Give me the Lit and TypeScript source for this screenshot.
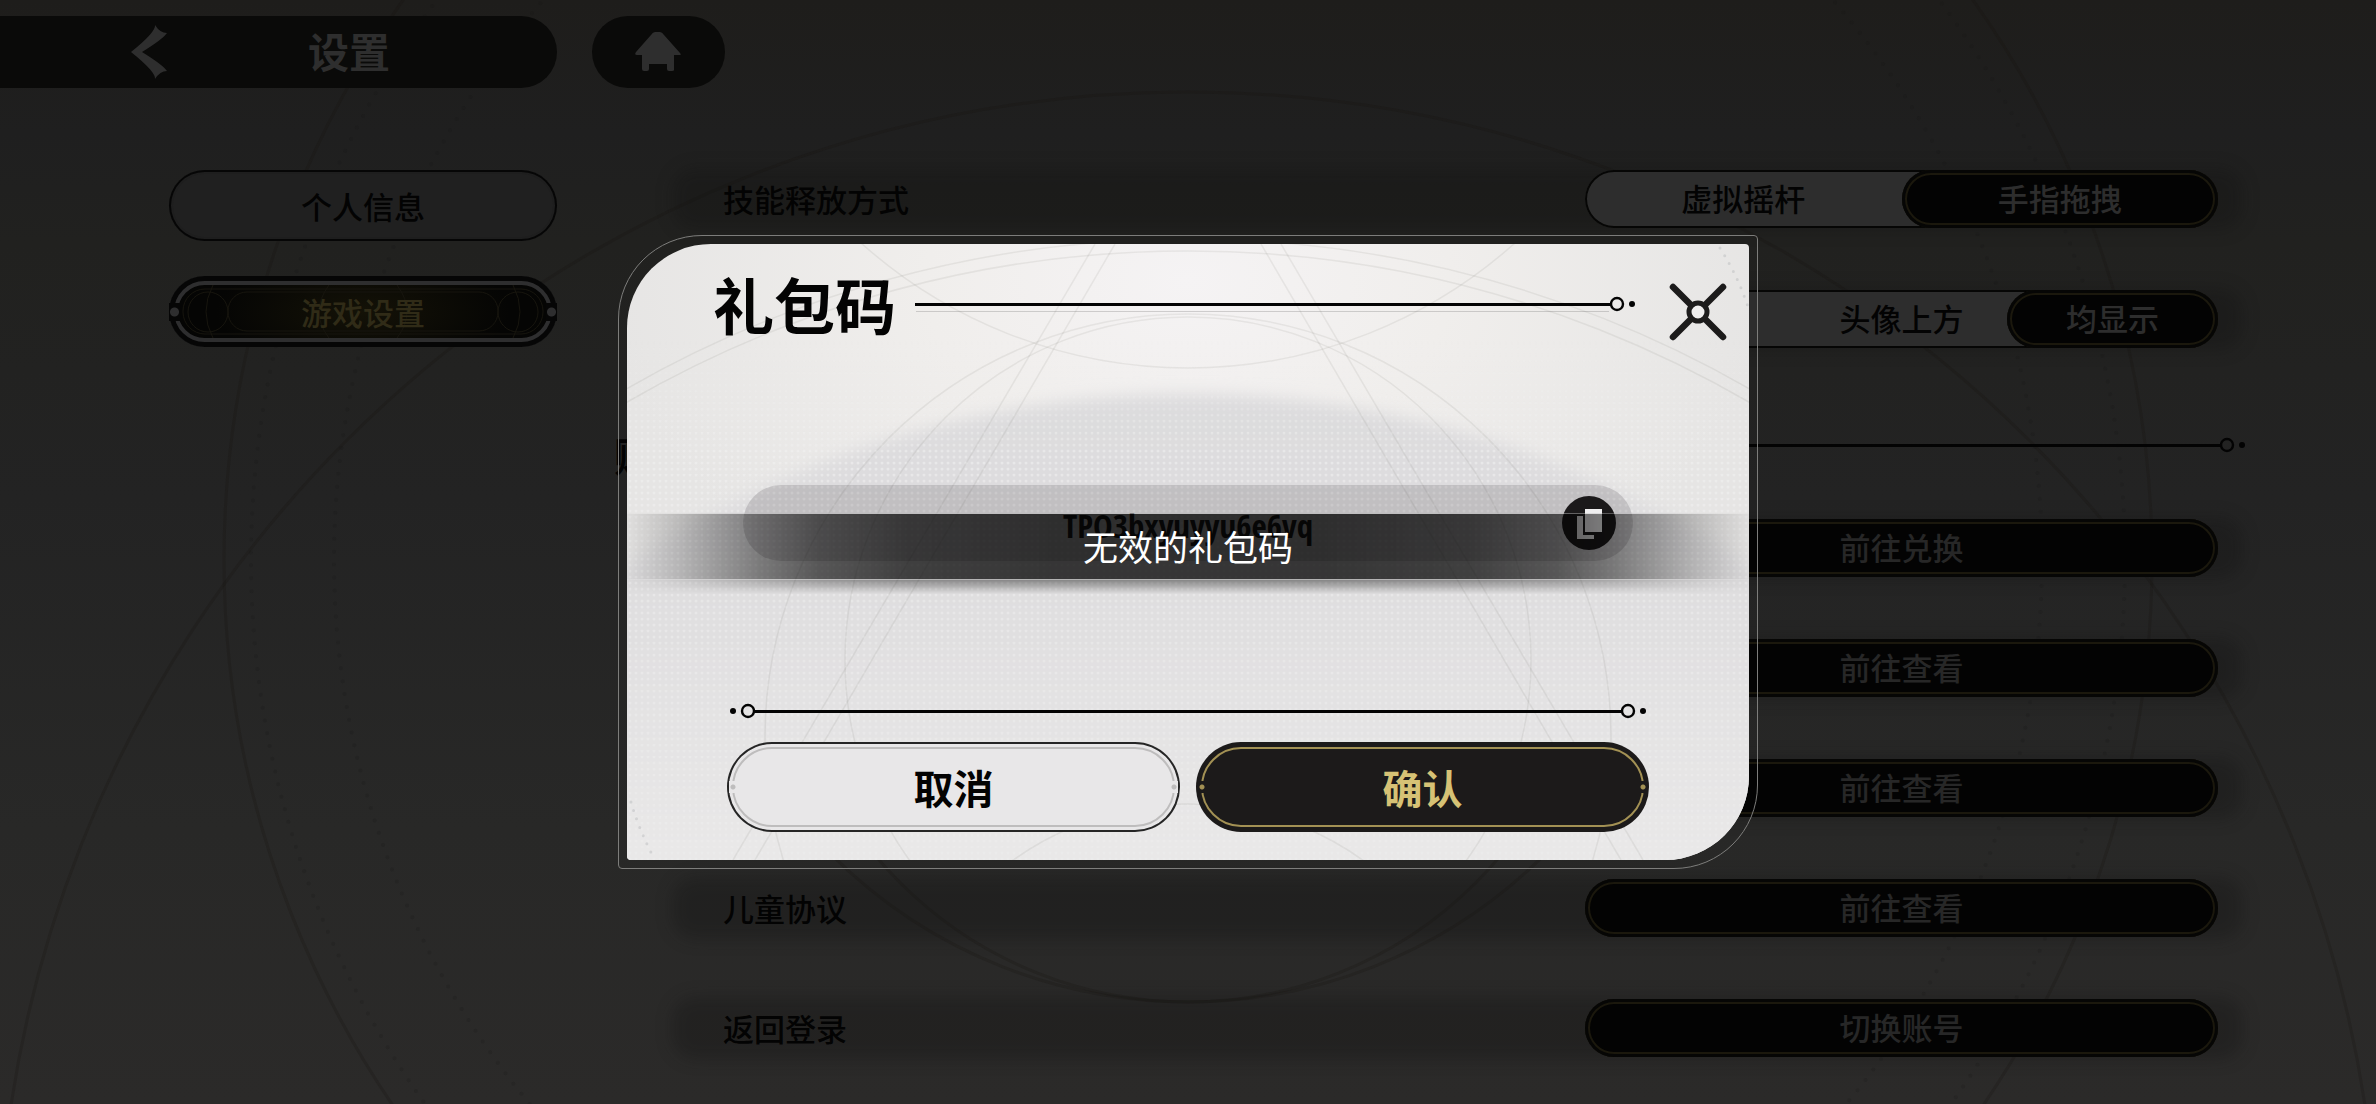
import { LitElement, html, css, svg } from "lit";
import { customElement, property, state } from "lit/decorators.js";
import { classMap } from "lit/directives/class-map.js";

const buttonReset = css`
  * {
    box-sizing: border-box;
  }
  button {
    margin: 0;
    padding: 0;
    border: 0;
    background: none;
    color: inherit;
    font: inherit;
    cursor: pointer;
  }
`;

/** Thin divider that ends in a small ring and a dot. */
@customElement("ring-rule")
class RingRule extends LitElement {
  @property({ type: Boolean }) both = false;
  @property({ type: Boolean }) echo = false;

  static styles = css`
    :host {
      display: flex;
      align-items: center;
      height: 20px;
    }
    .bar {
      flex: 1;
      height: 3px;
      background: currentColor;
    }
    .bar.echo {
      box-shadow: 0 7px 0 -1px rgba(90, 90, 90, 0.25);
    }
    svg {
      display: block;
      flex: none;
      width: 25px;
      height: 20px;
    }
    .start {
      transform: scaleX(-1);
    }
  `;

  private cap(name: string) {
    return html`<svg class=${name} viewBox="0 0 25 20" aria-hidden="true">
      <circle cx="7" cy="10" r="6" fill="none" stroke="currentColor" stroke-width="2.4" />
      <circle cx="22" cy="10" r="3" fill="currentColor" />
    </svg>`;
  }

  render() {
    return html`${this.both ? this.cap("start") : ""}<span class=${classMap({ bar: true, echo: this.echo })}></span
      >${this.cap("end")}`;
  }
}

/** Pill-shaped choice between several options. */
@customElement("pill-toggle")
class PillToggle extends LitElement {
  @property({ attribute: false }) options: string[] = [];
  @property({ type: Number }) selected = 0;

  static styles = [
    buttonReset,
    css`
      :host {
        display: flex;
        height: 58px;
        border-radius: 29px;
        background: #2d2d2d;
        box-shadow: inset 0 0 0 2px #060605;
        color: #030303;
      }
      .option {
        flex: 1;
        height: 58px;
        padding-bottom: 2px;
        border-radius: 29px;
        line-height: 56px;
      }
      .active {
        background: #030303;
        box-shadow: inset 0 0 0 3px #060605, inset 0 0 0 5px #1b180d;
        color: #2d2d2d;
      }
    `,
  ];

  render() {
    return this.options.map((label, i) =>
      label
        ? html`<button
            class=${classMap({ option: true, active: i === this.selected })}
            aria-pressed=${i === this.selected}
            @click=${() => (this.selected = i)}
          >
            ${label}
          </button>`
        : html`<span class="option"></span>`
    );
  }
}

/** Dialog that shows a gift code and the result of redeeming it. */
@customElement("gift-dialog")
class GiftDialog extends LitElement {
  @state() private code = "TPO3bxyuyyu6e6vq";

  static styles = [
    buttonReset,
    css`
      :host {
        display: block;
        position: relative;
        box-sizing: border-box;
        width: min(1140px, 94vw);
        padding: 8px;
        border: 1px solid #7d7d7b;
        border-radius: 84px 4px 84px 4px;
        color: #030303;
      }
      .panel {
        position: relative;
        overflow: hidden;
        border-radius: 84px 4px 84px 4px;
        background: radial-gradient(ellipse 52% 62% at 50% 6%, #f5f3f4, #f0eeec 45%, #e6e5e4 100%);
      }
      .art {
        position: absolute;
        inset: 0;
        width: 100%;
        height: 100%;
      }
      .head {
        position: relative;
        display: flex;
        align-items: center;
        height: 110px;
        padding: 10px 22px 0 86px;
      }
      h1 {
        margin: 0 19px 0 0;
        font-size: 61px;
        font-weight: 700;
        line-height: 88px;
      }
      .head ring-rule {
        flex: 1;
      }
      .close {
        width: 58px;
        height: 58px;
        margin: 16px 0 0 34px;
      }
      .close svg,
      .copy svg {
        display: block;
        width: 100%;
        height: 100%;
      }
      .body {
        position: relative;
        padding: 131px 100px 28px;
      }
      .field {
        position: relative;
        margin: 0 16px 140px;
      }
      .body > ring-rule {
        margin: 0 3px;
      }
      .code {
        display: block;
        width: 100%;
        height: 76px;
        padding: 4px 76px 0;
        border: 0;
        border-radius: 38px;
        outline: 0;
        background: rgba(20, 16, 20, 0.14);
        color: #1b1a1a;
        font-family: "Open Sans Condensed", "Liberation Sans Narrow", "Roboto Condensed", "Liberation Sans", sans-serif;
        font-size: 33px;
        font-weight: 700;
        text-align: center;
      }
      .copy {
        position: absolute;
        top: 11px;
        right: 17px;
        width: 54px;
        height: 54px;
      }
      .actions {
        display: grid;
        grid-template-columns: 1fr 1fr;
        gap: 16px;
        margin-top: 21px;
      }
      .action {
        position: relative;
        height: 90px;
        border-radius: 45px;
        font-size: 40px;
        font-weight: 700;
        line-height: 90px;
      }
      .action::before {
        content: "";
        position: absolute;
        inset: 5px;
        border: 2px solid var(--ring);
        border-radius: 40px;
      }
      .action::after {
        content: "";
        position: absolute;
        inset: 0 2px;
        background: radial-gradient(circle, var(--ring) 2px, var(--fill) 3px) left center / 8px 12px no-repeat,
          radial-gradient(circle, var(--ring) 2px, var(--fill) 3px) right center / 8px 12px no-repeat;
      }
      .cancel {
        --ring: #bebdbd;
        --fill: #e8e7e8;
        background: var(--fill);
        box-shadow: inset 0 0 0 2px #252525;
      }
      .confirm {
        --ring: #a39154;
        --fill: #1c1a1a;
        background: var(--fill);
        color: #d6c275;
      }
      .toast {
        position: absolute;
        top: 277px;
        left: 8px;
        right: 8px;
        height: 67px;
        color: #ffffff;
        font-size: 35px;
        font-weight: 400;
        line-height: 66px;
        text-align: center;
      }
      .fade {
        position: absolute;
        inset: 0 0 -24px;
        -webkit-mask-image: linear-gradient(
          90deg,
          rgba(0, 0, 0, 0.04),
          rgba(0, 0, 0, 0.26) 5%,
          rgba(0, 0, 0, 0.6) 12%,
          rgba(0, 0, 0, 0.8) 17%,
          rgba(0, 0, 0, 0.94) 25%,
          #000 38%,
          #000 62%,
          rgba(0, 0, 0, 0.94) 75%,
          rgba(0, 0, 0, 0.8) 83%,
          rgba(0, 0, 0, 0.6) 88%,
          rgba(0, 0, 0, 0.26) 95%,
          rgba(0, 0, 0, 0.04)
        );
      }
      .band {
        height: 67px;
        border-top: 1px solid rgba(190, 190, 190, 0.6);
        border-bottom: 1px solid rgba(150, 150, 150, 0.6);
        background: rgba(0, 0, 0, 0.76);
        background-clip: padding-box;
      }
      .shade {
        height: 14px;
        background: linear-gradient(rgba(0, 0, 0, 0.4), rgba(0, 0, 0, 0));
      }
      .message {
        position: relative;
      }
    `,
  ];

  private renderArt() {
    const star = [
      [468, 106],
      [488, 128],
      [654, 1016],
      [634, 994],
    ];
    return html`<svg class="art" viewBox="0 0 1122 616" preserveAspectRatio="none" aria-hidden="true">
      <defs>
        <linearGradient id="hill" gradientUnits="userSpaceOnUse" x1="0" y1="150" x2="0" y2="616">
          <stop offset="0" stop-color="#dcdbdd" />
          <stop offset="0.5" stop-color="#e0dfe0" />
          <stop offset="1" stop-color="#e9e8e8" />
        </linearGradient>
        <linearGradient id="grainFade" x1="0" y1="0" x2="0" y2="1">
          <stop offset="0.15" stop-color="#ffffff" stop-opacity="0" />
          <stop offset="0.35" stop-color="#ffffff" stop-opacity="0.9" />
          <stop offset="1" stop-color="#ffffff" stop-opacity="0.5" />
        </linearGradient>
        <filter id="soft" x="-5%" y="-5%" width="110%" height="110%">
          <feGaussianBlur stdDeviation="8" />
        </filter>
        <pattern id="grain" width="6" height="6" patternUnits="userSpaceOnUse">
          <circle cx="3" cy="3" r="1.5" fill="#f2f1f1" fill-opacity="0.6" />
        </pattern>
        <mask id="grainMask"><rect width="1122" height="616" fill="url(#grainFade)" /></mask>
      </defs>
      <circle cx="561" cy="1160" r="1010" fill="url(#hill)" filter="url(#soft)" />
      <rect width="1122" height="616" fill="url(#grain)" mask="url(#grainMask)" />
      <g fill="none" stroke="#6b675f" stroke-opacity="0.1" stroke-width="1.5">
        ${star.map(([top, bottom]) => svg`<path d="M${top} 0 L${bottom} 616" />`)}
        <circle cx="561" cy="1122" r="1127" />
        <circle cx="561" cy="1122" r="1115" />
        <circle cx="561" cy="493" r="423" />
        <circle cx="561" cy="416" r="343" />
        <circle cx="561" cy="-366" r="490" />
        <circle cx="561" cy="860" r="300" />
      </g>
      <g fill="none" stroke="#7d8288" stroke-opacity="0.2" stroke-width="3" stroke-linecap="round" stroke-dasharray="0 9">
        <path d="M1093 4 Q1112 34 1122 66" />
        <path d="M4 558 Q12 586 28 616" />
      </g>
    </svg>`;
  }

  render() {
    return html`
      <div class="panel">
        ${this.renderArt()}
        <div class="head">
          <h1>礼包码</h1>
          <ring-rule echo></ring-rule>
          <button class="close" aria-label="关闭">
            <svg viewBox="0 0 58 58" fill="none" stroke="#1c1b1b" stroke-linecap="round">
              <path d="M4 4 L22 22 M54 4 L36 22 M4 54 L22 36 M54 54 L36 36" stroke-width="6.5" />
              <circle cx="29" cy="29" r="9" stroke-width="5" fill="#eeeded" />
            </svg>
          </button>
        </div>
        <div class="body">
          <div class="field">
            <input
              class="code"
              aria-label="礼包码"
              spellcheck="false"
              .value=${this.code}
              @input=${(e: Event) => (this.code = (e.target as HTMLInputElement).value)}
            />
            <button class="copy" aria-label="复制">
              <svg viewBox="0 0 54 54">
                <circle cx="27" cy="27" r="27" fill="#1b191a" />
                <path d="M15 20 H21 V39 H32 V43 H15 Z" fill="#e6e5e6" />
                <path d="M23 13 H40 V36 H23 Z" fill="#f0eff0" />
              </svg>
            </button>
          </div>
          <ring-rule both></ring-rule>
          <div class="actions">
            <button class="action cancel">取消</button>
            <button class="action confirm">确认</button>
          </div>
        </div>
      </div>
      <div class="toast" role="status">
        <div class="fade">
          <div class="band"></div>
          <div class="shade"></div>
        </div>
        <span class="message">无效的礼包码</span>
      </div>
    `;
  }
}

interface SettingRow {
  label: string;
  options?: string[];
  selected?: number;
  action?: string;
}

@customElement("app-root")
class AppRoot extends LitElement {
  @state() private tab = 1;

  private tabs = ["个人信息", "游戏设置"];

  private battleRows: SettingRow[] = [
    { label: "技能释放方式", options: ["虚拟摇杆", "手指拖拽"], selected: 1 },
    { label: "", options: ["", "头像上方", "均显示"], selected: 2 },
  ];

  private accountRows: SettingRow[] = [
    { label: "", action: "前往兑换" },
    { label: "", action: "前往查看" },
    { label: "", action: "前往查看" },
    { label: "儿童协议", action: "前往查看" },
    { label: "返回登录", action: "切换账号" },
  ];

  static styles = [
    buttonReset,
    css`
      :host {
        display: block;
        color: #030303;
        font-family: "Noto Sans CJK SC", "Noto Sans", sans-serif;
        font-size: 31px;
        font-weight: 500;
      }
      .screen {
        position: relative;
        min-height: 100vh;
        overflow: hidden;
        padding-top: 16px;
        background: linear-gradient(#1e1d1b, #1f1f1f 12%, #21211f 22%, #232323 45%, #282827 75%, #2b2a29);
      }
      .sky {
        position: absolute;
        inset: 0;
        width: 100%;
        height: 100%;
      }
      .topbar {
        position: relative;
        display: flex;
        gap: 35px;
      }
      .crumb,
      .home {
        height: 72px;
        background: #0a0a09;
        color: #2e2e2e;
      }
      .crumb {
        display: flex;
        align-items: center;
        width: 557px;
        padding-left: 130px;
        border-radius: 0 36px 36px 0;
      }
      .back {
        width: 40px;
        height: 56px;
      }
      .back svg,
      .home svg {
        display: block;
        width: 100%;
        height: 100%;
      }
      .heading {
        margin: 0 0 4px 138px;
        font-size: 41px;
        font-weight: 700;
        line-height: 68px;
      }
      .home {
        width: 133px;
        border-radius: 36px;
      }
      .layout {
        position: relative;
        display: flex;
        gap: 109px;
        padding: 82px 131px 40px 169px;
      }
      nav {
        display: flex;
        flex-direction: column;
        gap: 35px;
        width: 388px;
      }
      .tab {
        position: relative;
        height: 71px;
        border-radius: 36px;
        background: #202020;
        box-shadow: inset 0 0 0 2px #060606, inset 0 0 0 4px #1e1e1e;
        line-height: 71px;
      }
      .tab.current {
        background: radial-gradient(ellipse 38% 80% at center, #141207, #050504);
        box-shadow: inset 0 0 0 5px #060606, inset 0 0 0 9px #2e2e2f;
        color: #302b17;
      }
      .tab.current::before,
      .tab.current::after {
        content: "";
        position: absolute;
        top: 27px;
        width: 11px;
        height: 18px;
        background: radial-gradient(circle, #2e2e2f 4px, #060606 5px);
      }
      .tab.current::before {
        left: 0;
      }
      .tab.current::after {
        right: 0;
      }
      .ornament {
        position: absolute;
        inset: 0;
        width: 100%;
        height: 100%;
      }
      .caption {
        position: relative;
      }
      .settings {
        flex: 1;
        min-width: 0;
      }
      .rows {
        display: flex;
        flex-direction: column;
        gap: 62px;
      }
      .row {
        position: relative;
        display: flex;
        align-items: center;
        justify-content: space-between;
        height: 58px;
        padding: 0 27px 0 57px;
      }
      .row::before {
        content: "";
        position: absolute;
        inset: -2px 2px -2px 6px;
        border-radius: 24px;
        background: rgba(18, 18, 18, 0.3);
        filter: blur(8px);
      }
      .label {
        position: relative;
        padding-bottom: 2px;
      }
      .control {
        position: relative;
        width: 633px;
      }
      .go {
        height: 58px;
        padding-bottom: 2px;
        border-radius: 29px;
        background: #030303;
        box-shadow: inset 0 0 0 3px #060605, inset 0 0 0 5px #1b180d;
        color: #272727;
        line-height: 56px;
      }
      .section {
        display: flex;
        align-items: center;
        height: 60px;
        margin: 67px 0 44px -52px;
      }
      .section h2 {
        margin: 20px 22px 0 0;
        font-size: 40px;
        font-weight: 700;
        line-height: 40px;
      }
      .section ring-rule {
        flex: 1;
      }
      .overlay {
        position: absolute;
        inset: 0;
        display: grid;
        place-items: center;
      }
    `,
  ];

  private renderSky() {
    return html`<svg class="sky" viewBox="0 0 2376 1104" preserveAspectRatio="xMidYMin slice" aria-hidden="true">
      <g fill="none" stroke="#15120c" stroke-opacity="0.22" stroke-width="3">
        <circle cx="1188" cy="560" r="964" />
        <circle cx="1188" cy="1282" r="1190" />
        <path d="M781 595 A407 407 0 0 0 1595 595" />
        <path d="M683 497 A505 505 0 0 0 1693 497" />
      </g>
      <g fill="none" stroke="#121212" stroke-opacity="0.16" stroke-width="4" stroke-linecap="round" stroke-dasharray="0 13">
        <circle cx="1188" cy="560" r="937" />
        <circle cx="1188" cy="560" r="854" />
      </g>
    </svg>`;
  }

  private renderTab(label: string, index: number) {
    const current = index === this.tab;
    return html`<button class=${classMap({ tab: true, current })} @click=${() => (this.tab = index)}>
      ${current
        ? html`<svg class="ornament" viewBox="0 0 388 71" fill="none" stroke="#17150e" aria-hidden="true">
            <rect x="14" y="13" width="360" height="45" rx="22" />
            <rect x="59" y="16" width="270" height="39" rx="19" />
            <ellipse cx="39" cy="36" rx="20" ry="20" />
            <ellipse cx="349" cy="36" rx="20" ry="20" />
            <path d="M44 9 Q30 36 44 62 M344 9 Q358 36 344 62 M160 9 Q140 36 160 62 M228 9 Q248 36 228 62" />
          </svg>`
        : ""}
      <span class="caption">${label}</span>
    </button>`;
  }

  private renderRow(row: SettingRow) {
    return html`<div class="row">
      <span class="label">${row.label}</span>
      ${row.options
        ? html`<pill-toggle class="control" .options=${row.options} .selected=${row.selected ?? 0}></pill-toggle>`
        : html`<button class="control go">${row.action}</button>`}
    </div>`;
  }

  render() {
    return html`
      <div class="screen">
        ${this.renderSky()}
        <header class="topbar">
          <div class="crumb">
            <button class="back" aria-label="返回">
              <svg viewBox="0 0 40 56" fill="currentColor">
                <path d="M25 1 Q30 9 37 9 Q33 15 12 28 Q33 41 37 47 Q30 47 25 55 Q26 48 1 28 Q26 8 25 1 Z" />
              </svg>
            </button>
            <p class="heading">设置</p>
          </div>
          <button class="home" aria-label="主页">
            <svg viewBox="0 0 133 72" fill="currentColor">
              <path
                d="M63 16 H68 Q70 16 72 19 L88 37 Q90 39 87 39 H82 V54 Q82 55 80 55 H77 Q75 55 75 53 V48 H57 V53 Q57 55 55 55 H52 Q50 55 50 53 V39 H45 Q42 39 44 36 L59 19 Q61 16 63 16 Z"
              />
            </svg>
          </button>
        </header>
        <div class="layout">
          <nav>${this.tabs.map((label, i) => this.renderTab(label, i))}</nav>
          <main class="settings">
            <div class="rows">${this.battleRows.map((row) => this.renderRow(row))}</div>
            <div class="section">
              <h2>账号</h2>
              <ring-rule></ring-rule>
            </div>
            <div class="rows">${this.accountRows.map((row) => this.renderRow(row))}</div>
          </main>
        </div>
        <div class="overlay">
          <gift-dialog role="dialog" aria-label="礼包码"></gift-dialog>
        </div>
      </div>
    `;
  }
}
